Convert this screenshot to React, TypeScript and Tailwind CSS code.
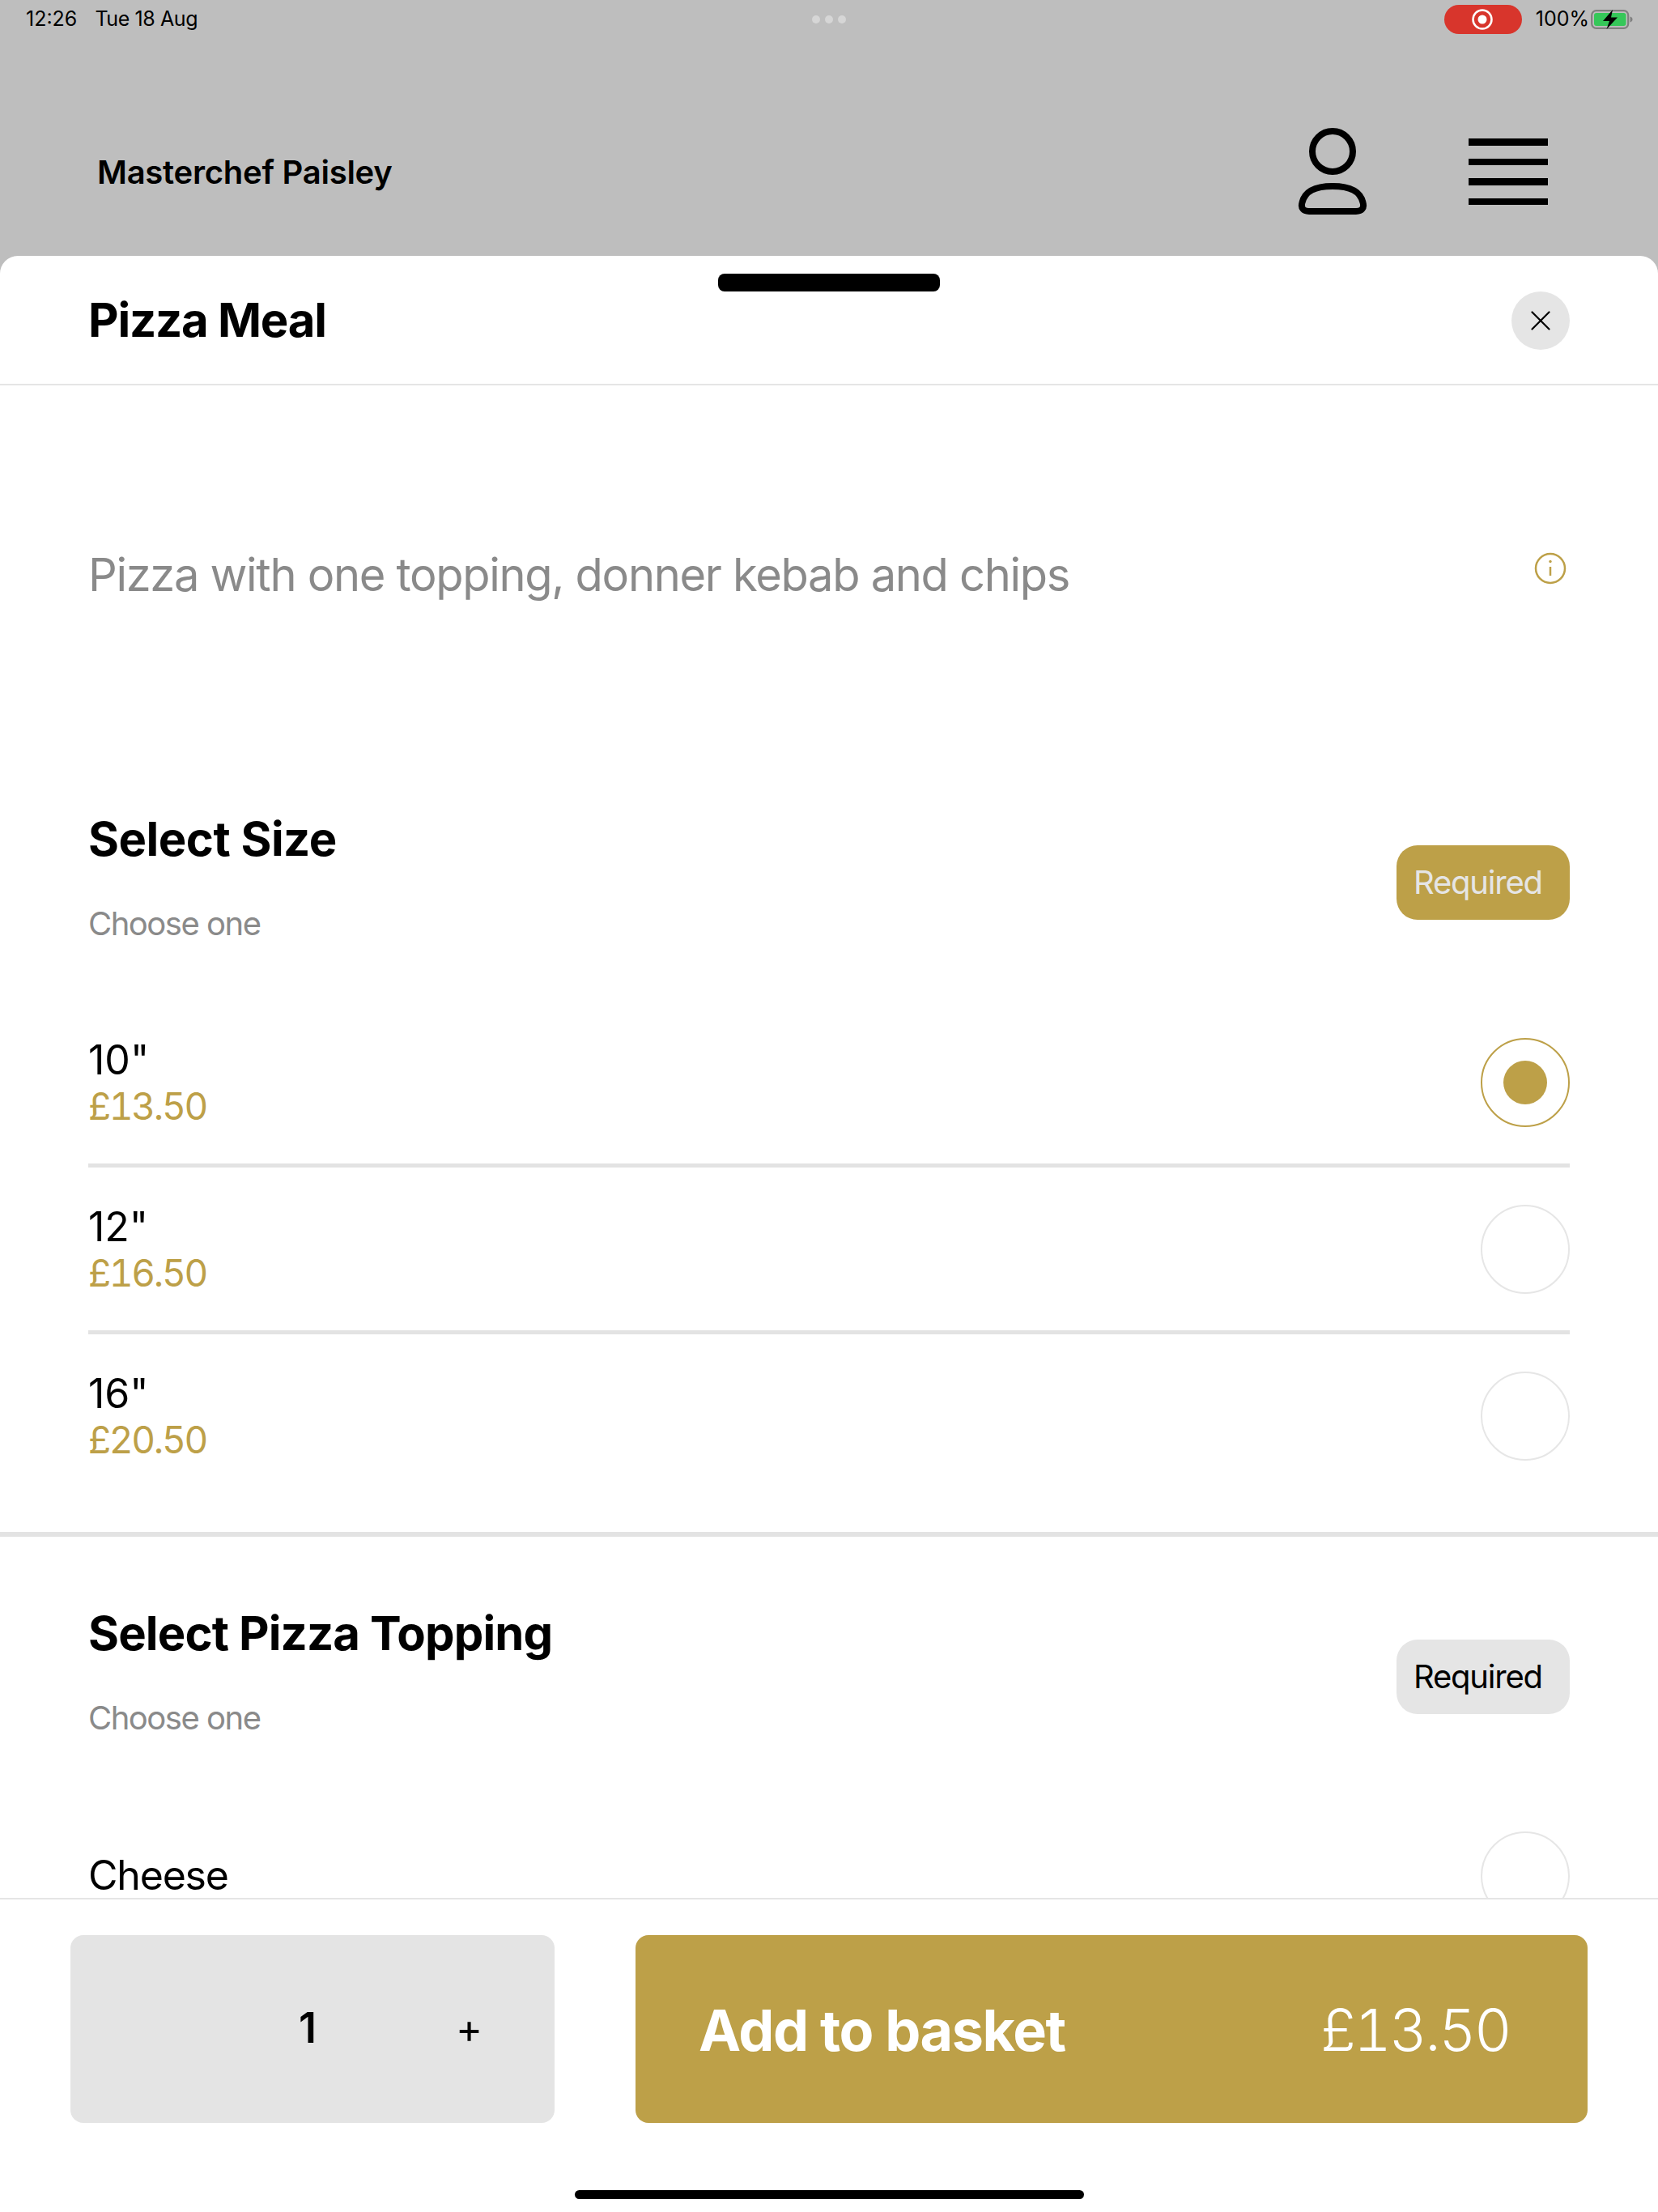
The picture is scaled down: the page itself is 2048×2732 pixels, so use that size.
import React from "react";

const GOLD = "#bda048";

function Radio({ selected }: { selected?: boolean }) {
  return (
    <div
      className={
        selected
          ? "w-[110px] h-[110px] shrink-0 rounded-full border-2 border-[#bda048] flex items-center justify-center"
          : "w-[110px] h-[110px] shrink-0 rounded-full border-2 border-[#e6e6e6] flex items-center justify-center"
      }
    >
      {selected && <div className="w-[54px] h-[54px] rounded-full bg-[#bda048]" />}
    </div>
  );
}

function SizeRow({ label, price, selected, last }: { label: string; price: string; selected?: boolean; last?: boolean }) {
  return (
    <div className={last ? "h-[206px] flex items-center justify-between border-b-[5px] border-transparent" : "h-[206px] flex items-center justify-between border-b-[5px] border-[#e3e3e3]"}>
      <div className="flex flex-col">
        <span className="text-[50px] leading-[58px] text-black">{label}</span>
        <span className="text-[46px] leading-[56px] text-[#bda048] tabular-nums tracking-[-2.3px]">{price}</span>
      </div>
      <Radio selected={selected} />
    </div>
  );
}

function SectionHead({ title, gold, titleClass }: { title: string; gold?: boolean; titleClass: string }) {
  return (
    <div className="flex items-center justify-between">
      <div className="flex flex-col gap-[46px]">
        <h2 className={titleClass}>{title}</h2>
        <p className="text-[40px] leading-[48px] text-[#8a8a8a] tracking-[-1.5px]">Choose one</p>
      </div>
      <div
        className={
          gold
            ? "w-[214px] h-[92px] mt-[14px] rounded-[26px] bg-[#bda048] text-[#e5e5e5] text-[40px] tracking-[-1.2px] flex items-center pl-[21px]"
            : "w-[214px] h-[92px] mt-[14px] rounded-[26px] bg-[#e5e5e5] text-black text-[40px] tracking-[-1.2px] flex items-center pl-[21px]"
        }
      >
        Required
      </div>
    </div>
  );
}

export default function App() {
  return (
    <div className="relative w-[2048px] h-[2732px] bg-[#bebebe] flex flex-col overflow-hidden font-['Inter',sans-serif]">
      {/* status bar */}
      <div className="h-[48px] shrink-0 flex items-center justify-between pl-[32px] pr-[31px] text-[25px] text-black">
        <div className="flex items-center gap-[22px]">
          <span>12:26</span>
          <span className="tracking-[-0.4px]">Tue 18 Aug</span>
        </div>
        <div className="flex items-center">
          <div className="w-[96px] h-[36px] pr-[2px] rounded-[18px] bg-[#d8352c] flex items-center justify-center">
            <svg width="26" height="26" viewBox="0 0 26 26">
              <circle cx="13" cy="13" r="11.5" fill="none" stroke="#fff" strokeWidth="2.5" />
              <circle cx="13" cy="13" r="5.5" fill="#fff" />
            </svg>
          </div>
          <span className="ml-[17px]">100%</span>
          <svg className="ml-[2px]" width="52" height="24" viewBox="0 0 52 24">
            <rect x="1.2" y="1.2" width="45" height="21.6" rx="5.5" fill="none" stroke="#7f7f7f" strokeWidth="2.2" />
            <rect x="4" y="4" width="39.5" height="16" rx="3" fill="#35c759" />
            <path d="M48.5 8.5c2 .6 3 1.9 3 3.5s-1 2.9-3 3.5z" fill="#7f7f7f" />
            <path d="M27 0 L15 14 H23 L19.5 24 L33 9.5 H25 Z" fill="#000" />
          </svg>
        </div>
      </div>
      <div className="absolute top-[19px] left-[1003px] flex gap-[6px]">
        <div className="w-[10px] h-[10px] rounded-full bg-[#d6d6d6]" />
        <div className="w-[10px] h-[10px] rounded-full bg-[#d6d6d6]" />
        <div className="w-[10px] h-[10px] rounded-full bg-[#d6d6d6]" />
      </div>

      {/* app header */}
      <div className="h-[268px] shrink-0 flex items-center pl-[120px] pt-[62px]">
        <span className="text-[40px] font-semibold text-black flex-1 tracking-[-0.25px]">Masterchef Paisley</span>
        <svg className="mr-[124px]" width="88" height="110" viewBox="0 0 88 110" fill="none" stroke="#000" strokeWidth="8">
          <circle cx="44" cy="29" r="25" />
          <path d="M15 103 C8 103 4.5 99 6.5 92 C10 78 22 72 44 72 C66 72 78 78 81.5 92 C83.5 99 80 103 73 103 Z" strokeLinejoin="round" />
        </svg>
        <div className="w-[98px] mr-[136px] mb-[2px] flex flex-col gap-[16px]">
          <div className="h-[8.5px] bg-black" />
          <div className="h-[8.5px] bg-black" />
          <div className="h-[8.5px] bg-black" />
          <div className="h-[8.5px] bg-black" />
        </div>
      </div>

      {/* sheet */}
      <div className="relative flex-1 min-h-0 bg-white rounded-t-[22px] flex flex-col">
        <div className="absolute top-[22px] left-[887px] w-[274px] h-[22px] rounded-[8px] bg-black" />
        <div className="h-[160px] shrink-0 border-b-2 border-[#e5e5e5] flex items-center justify-between pl-[109px] pr-[109px]">
          <h1 className="text-[58px] font-bold text-black tracking-[-1.2px]">Pizza Meal</h1>
          <div className="w-[72px] h-[72px] mt-[2px] rounded-full bg-[#e5e5e5] flex items-center justify-center">
            <svg width="24" height="24" viewBox="0 0 24 24" fill="none" stroke="#000" strokeWidth="2.2" strokeLinecap="round">
              <path d="M1.5 1.5 L22.5 22.5 M22.5 1.5 L1.5 22.5" />
            </svg>
          </div>
        </div>

        <div className="flex-1 min-h-0 overflow-hidden">
          <div className="h-[468px] mb-[57px] flex items-center justify-between pl-[109px] pr-[113px]">
            <p className="text-[56px] text-[#8a8a8a] tracking-[-1.3px]">Pizza with one topping, donner kebab and chips</p>
            <svg className="-mt-[16px]" width="40" height="40" viewBox="0 0 40 40" fill="none" stroke={GOLD} strokeWidth="2.5">
              <circle cx="20" cy="20" r="18" />
              <path d="M20 18 V29" />
              <circle cx="20" cy="11.5" r="1.7" fill={GOLD} stroke="none" />
            </svg>
          </div>

          <div className="px-[109px]">
            <SectionHead title="Select Size" gold titleClass="text-[58px] leading-[70px] font-bold text-black tracking-[-0.5px]" />
            <div className="mt-[71px]">
              <SizeRow label={'10"'} price="£13.50" selected />
              <SizeRow label={'12"'} price="£16.50" />
              <SizeRow label={'16"'} price="£20.50" last />
            </div>
          </div>

          <div className="h-[6px] bg-[#e3e3e3] mt-[38px]" />

          <div className="px-[109px] pt-[84px]">
            <SectionHead title="Select Pizza Topping" titleClass="text-[58px] leading-[70px] font-bold text-black tracking-[-0.85px]" />
            <div className="mt-[70px] h-[206px] flex items-center justify-between border-b-[5px] border-transparent">
              <span className="text-[50px] text-black tracking-[-1.2px]">Cheese</span>
              <Radio />
            </div>
          </div>
        </div>

        <div className="h-[388px] shrink-0 bg-white border-t-2 border-[#e5e5e5] relative">
          <div className="flex items-start pl-[87px] pr-[87px] pt-[44px]">
            <div className="relative w-[598px] h-[232px] rounded-[16px] bg-[#e4e4e4]">
              <span className="absolute left-[282px] top-[85px] text-[52px] leading-[60px] font-semibold text-black">1</span>
              <span className="absolute left-[476px] top-[85px] text-[50px] leading-[60px] text-black">+</span>
            </div>
            <div className="ml-[100px] flex-1 h-[232px] pt-[2px] rounded-[16px] bg-[#bda048] flex items-center justify-between pl-[78px] pr-[96px]">
              <span className="text-[70px] font-bold text-white tracking-[-1.4px]">Add to basket</span>
              <span className="text-[72px] font-light text-white tabular-nums tracking-[-2.6px]">£13.50</span>
            </div>
          </div>
          <div className="absolute left-[710px] top-[359px] w-[629px] h-[11px] rounded-full bg-black" />
        </div>
      </div>
    </div>
  );
}
